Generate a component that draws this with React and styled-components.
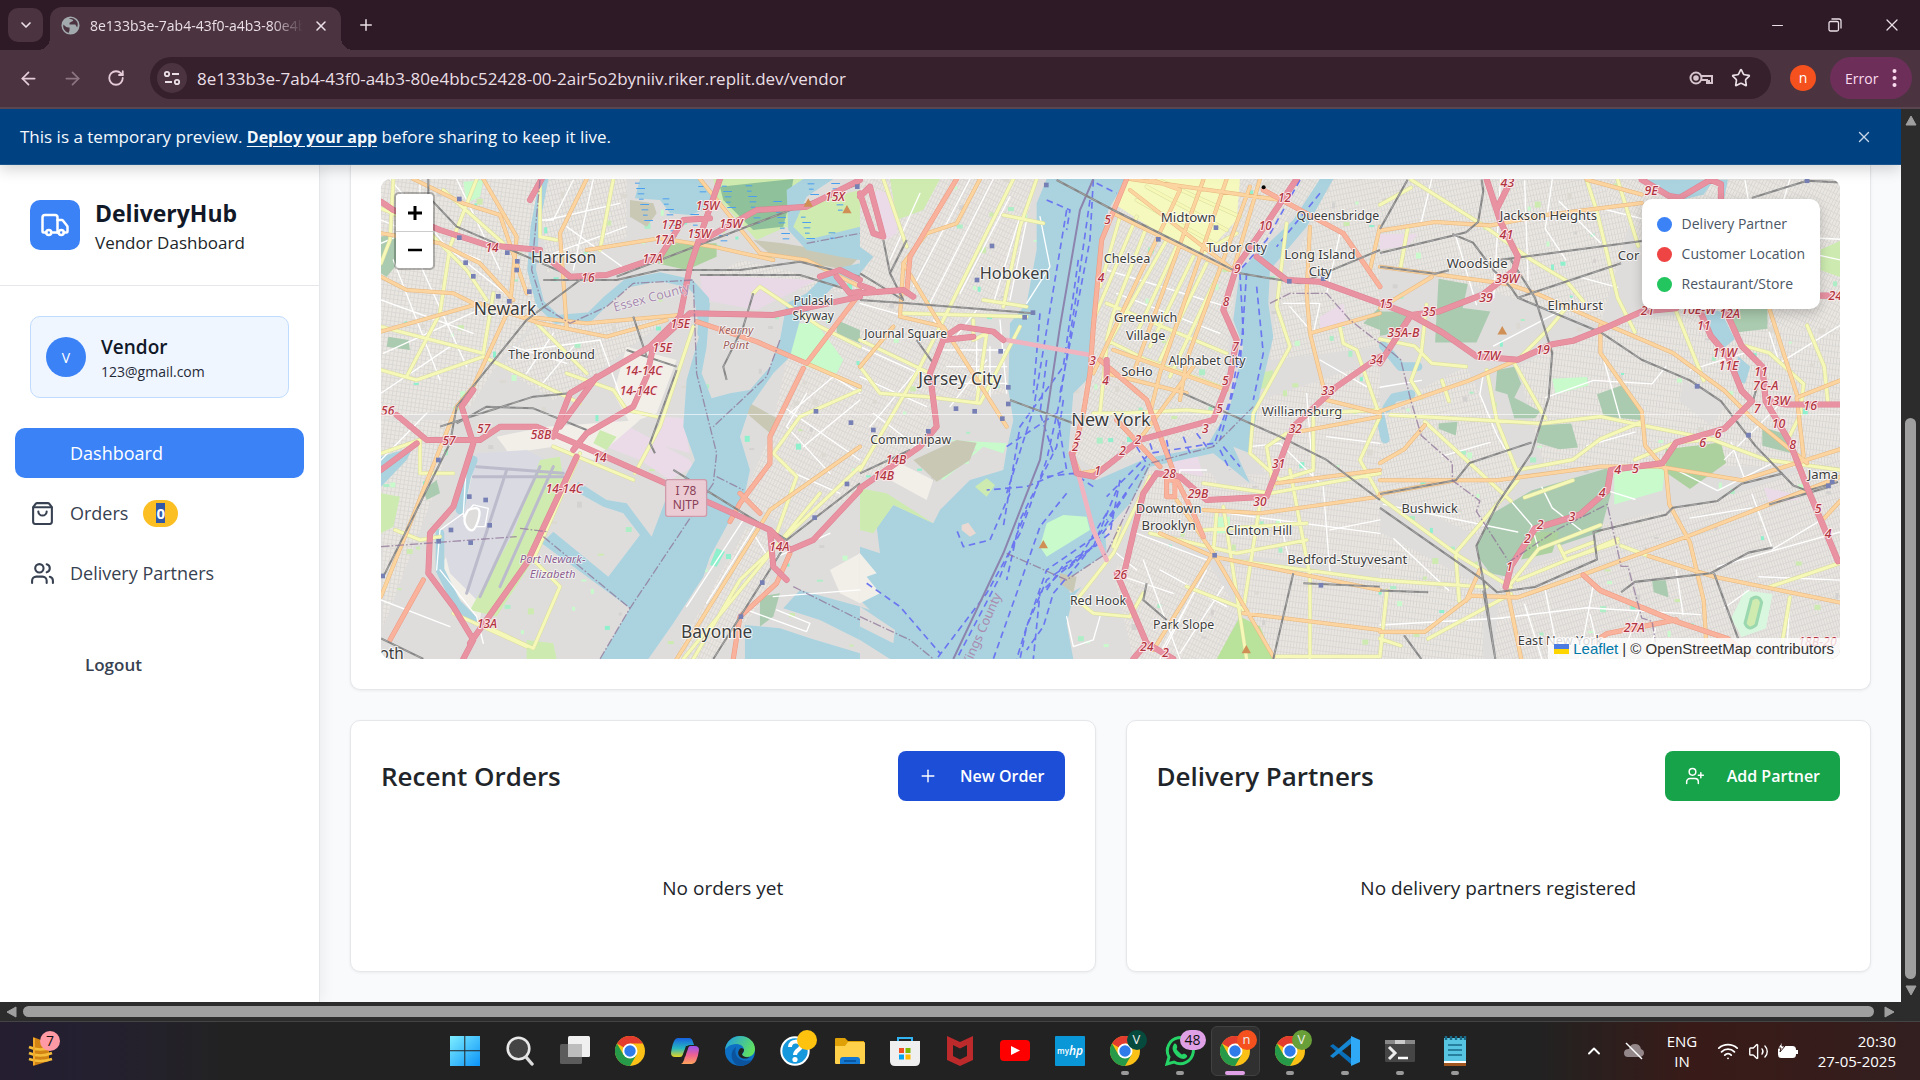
import React from "react";
import styled, { createGlobalStyle } from "styled-components";
import { Truck, ShoppingBag, Users, Plus, UserPlus, X, ArrowLeft, ArrowRight, RotateCw, ChevronDown, ChevronUp, Minus, Star, Wifi, Volume2 } from "lucide-react";

const ui = `"Open Sans", "Noto Sans", sans-serif`;

const Global = createGlobalStyle`
  *, *::before, *::after { box-sizing: border-box; }
  html, body { margin: 0; overflow: hidden; }
  body { font-family: ${ui}; color: #212529; background: #f9fafb; }
  button { font-family: inherit; border: 0; padding: 0; background: none; color: inherit; cursor: pointer; }
  h1, h2, p { margin: 0; }
  svg { display: block; flex: none; }
`;

const Screen = styled.div`display: flex; flex-direction: column; height: 100vh; min-height: 720px;`;

/* ---------- browser window ---------- */
const TabStrip = styled.header`
  display: flex; align-items: center; height: 50px; padding-left: 8px;
  background: #2e1a26; color: #eadfe5;
`;
const TabMenu = styled.button`
  display: grid; place-items: center; width: 35px; height: 34px; border-radius: 10px; background: #4b3440;
`;
const Tab = styled.div`
  position: relative; display: flex; align-items: center; gap: 10px; align-self: flex-end;
  width: 291px; height: 43px; margin-left: 7px; padding: 0 12px 6px 11px;
  border-radius: 12px 12px 0 0; background: #4b3440; font-size: 14px;
  &::before, &::after {
    content: ""; position: absolute; bottom: 0; width: 12px; height: 12px;
  }
  &::before { right: 100%; background: radial-gradient(circle at 0 0, transparent 12px, #4b3440 12px); }
  &::after { left: 100%; background: radial-gradient(circle at 100% 0, transparent 12px, #4b3440 12px); }
`;
const TabTitle = styled.span`
  flex: 1; overflow: hidden; white-space: nowrap;
  mask-image: linear-gradient(90deg, #000 85%, transparent);
`;
const NewTab = styled.button`display: grid; place-items: center; width: 34px; height: 34px; margin-left: 8px;`;
const WindowButtons = styled.div`
  display: flex; margin-left: auto; height: 100%;
  button { display: grid; place-items: center; width: 57px; }
`;
const Toolbar = styled.div`
  display: flex; align-items: center; height: 59px; padding: 0 8px 1px 6px;
  background: #4b3440; color: #eadfe5; border-bottom: 2px solid #5a4650;
`;
const NavButton = styled.button`
  display: grid; place-items: center; width: 44px; height: 40px; color: ${(p) => (p.$dim ? "#8d7682" : "#e6cbd9")};
`;
const AddressBar = styled.label`
  display: flex; align-items: center; flex: 1; height: 42px; margin-left: 12px; padding: 0 20px 0 7px;
  border-radius: 21px; background: #35202b;
`;
const SiteInfo = styled.button`
  display: grid; place-items: center; width: 30px; height: 30px; border-radius: 50%; background: #4b3440;
`;
const Address = styled.input`
  flex: 1; min-width: 0; border: 0; outline: 0; padding: 0 10px; background: none; color: #eadfe5;
  font-family: ${ui}; font-size: 17px;
`;
const BarIcon = styled.button`display: grid; place-items: center; width: 40px; height: 30px; &:last-child { width: 20px; margin-left: 10px; }`;
const Profile = styled.button`
  width: 26px; height: 26px; margin: 0 14px 0 19px; border-radius: 50%; background: #f4511e; color: #fff; font-size: 14px; line-height: 24px;
`;
const ErrorPill = styled.button`
  display: flex; align-items: center; justify-content: space-between; width: 82px; height: 42px; padding: 0 15px;
  border-radius: 21px; background: #6d2f5a; color: #fbdcee; font-size: 14px;
`;

const Viewport = styled.div`
  display: grid; flex: 1; min-height: 0; grid-template: minmax(0, 1fr) 19px / minmax(0, 1fr) 19px; background: #2c2c2c;
`;
const Scrollbar = styled.div`
  display: flex; flex-direction: ${(p) => (p.$vertical ? "column" : "row")}; align-items: center;
  padding: ${(p) => (p.$vertical ? "5px 0" : "0 5px")}; color: #9f9f9f;
`;
const ScrollSpace = styled.span`flex: ${(p) => p.$share};`;
const ScrollThumb = styled.span`
  flex: ${(p) => p.$share}; border-radius: 6px; background: #9f9f9f;
  ${(p) => (p.$vertical ? "width: 11px; margin: 4px 4px 6px;" : "height: 11px; margin: 4px 10px 4px 6px;")}
`;
const PageArea = styled.div`display: flex; flex-direction: column; min-height: 0; overflow: hidden; background: #f9fafb;`;

/* ---------- preview banner ---------- */
const Banner = styled.aside`
  position: relative; z-index: 2; display: flex; align-items: center; justify-content: space-between;
  height: 56px; flex: none; padding: 0 28px 0 20px; background: #004182; border-bottom: 1px solid #1c548e; color: #f5f9fc;
  font-size: 17px; box-shadow: 0 4px 14px rgba(0, 0, 0, 0.18);
  a { color: inherit; font-size: 16px; font-weight: 700; text-underline-offset: 3px; }
`;

/* ---------- vendor dashboard ---------- */
const Shell = styled.div`display: flex; flex: 1; min-height: 0;`;
const Sidebar = styled.nav`
  width: 320px; flex: none; background: #fff; border-right: 1px solid #e5e7eb; box-shadow: 4px 0 12px rgba(0, 0, 0, 0.05);
`;
const Brand = styled.div`
  display: flex; align-items: center; gap: 15px; height: 121px; padding: 0 30px; border-bottom: 1px solid #e5e7eb;
`;
const BrandMark = styled.span`
  display: grid; place-items: center; width: 50px; height: 50px; border-radius: 10px; background: #3b82f6; color: #fff;
`;
const BrandName = styled.h1`font-size: 23px; line-height: 36px; font-weight: 700; color: #111827;`;
const BrandSub = styled.p`font-size: 17px; line-height: 24px;`;
const UserCard = styled.div`
  display: flex; align-items: center; gap: 15px; height: 82px; margin: 30px; padding: 0 15px;
  border: 1px solid #bfdbfe; border-radius: 10px; background: #eff6ff;
`;
const UserAvatar = styled.span`
  display: grid; place-items: center; width: 40px; height: 40px; border-radius: 50%; background: #3b82f6; color: #fff; font-size: 14px;
`;
const UserName = styled.p`font-size: 19px; line-height: 30px; font-weight: 600; color: #111827;`;
const UserMail = styled.p`font-size: 14px; line-height: 20px; color: #1f2937;`;
const Menu = styled.div`display: flex; flex-direction: column; gap: 10px; padding: 0 15px;`;
const MenuItem = styled.a`
  display: flex; align-items: center; gap: 15px; height: 50px; padding: 0 15px; border-radius: 10px;
  font-size: 18px; text-decoration: none;
  color: ${(p) => (p.$active ? "#fff" : "#374151")}; background: ${(p) => (p.$active ? "#3b82f6" : "transparent")};
`;
const MenuIcon = styled.span`display: grid; place-items: center; width: 25px; height: 25px;`;
const CountBadge = styled.span`
  padding: 3px 13px; border-radius: 14px; background: #fbbf24; color: #fff; font-size: 15px; line-height: 21px; font-weight: 700;
  mark { background: #3159a8; color: inherit; }
`;
const Logout = styled.button`
  display: block; margin: 41px 30px 0; padding: 0 55px; height: 50px; font-size: 17px; font-weight: 600; color: #374151;
`;
const Main = styled.main`display: flex; flex-direction: column; gap: 30px; flex: 1; min-width: 0; padding: 0 30px 30px;`;
const Card = styled.section`
  padding: 30px; border: 1px solid #e5e7eb; border-radius: 10px; background: #fff; box-shadow: 0 1px 3px rgba(0, 0, 0, 0.06);
`;
const MapCard = styled(Card)`padding-top: 14px; border-top: 0; border-radius: 0 0 10px 10px;`;
const CardGrid = styled.div`display: grid; grid-template-columns: 1fr 1fr; gap: 30px;`;
const CardHead = styled.div`display: flex; align-items: center; justify-content: space-between; height: 50px;`;
const CardTitle = styled.h2`font-size: 26px; line-height: 36px; font-weight: 600; color: #212529;`;
const Action = styled.button`
  display: flex; align-items: center; gap: 20px; height: 50px; padding: 0 20px; border-radius: 8px;
  background: ${(p) => p.$tone}; color: #fff; font-size: 16px; font-weight: 600;
  svg { margin-right: 2px; }
`;
const Empty = styled.p`padding: 72px 0 50px; text-align: center; font-size: 19px; line-height: 30px; height: 140px;`;

/* ---------- map ---------- */
const MapFrame = styled.div`position: relative; height: 480px; overflow: hidden; border-radius: 10px; background: #dedddc;`;
const MapSvg = styled.svg`width: 100%; height: 100%; text { font-family: "Noto Sans", sans-serif; text-anchor: middle; paint-order: stroke; stroke-linejoin: round; }`;
const ZoomControl = styled.div`
  position: absolute; top: 13px; left: 13px; display: grid; grid-template-rows: 37px 37px; width: 41px;
  border: 2px solid rgba(0, 0, 0, 0.25); border-radius: 5px; background: #fff; background-clip: padding-box;
  button { display: grid; place-items: center; color: #000; }
  button + button { border-top: 1px solid #ccc; }
`;
const Legend = styled.ul`
  position: absolute; top: 20px; right: 20px; display: grid; gap: 10px; margin: 0; padding: 15px; list-style: none;
  border-radius: 10px; background: #fff; box-shadow: 0 4px 12px rgba(0, 0, 0, 0.2); color: #4b5563; font-size: 14px; line-height: 20px;
  li { display: flex; align-items: center; gap: 10px; }
`;
const Dot = styled.span`width: 15px; height: 15px; border-radius: 50%; background: ${(p) => p.$color};`;
const Attribution = styled.div`
  position: absolute; right: 0; bottom: 0; display: flex; align-items: center; height: 21px; padding: 0 6px; gap: 4px;
  background: rgba(255, 255, 255, 0.8); color: #333; font-family: "Liberation Sans", Arial, sans-serif; font-size: 15px;
  a { color: #0078a8; text-decoration: none; }
`;

/* The map is drawn in three sheets, west to east; each has its own origin and scale. */
const sheets = [
  {
    at: "translate(-41 -19) scale(0.3333)",
    grids: [
      ["g1", "M123 57H600L570 330L600 470L480 600L390 740L123 780Z"], ["g2", "M600 57H860V230L780 270L620 340Z"],
      ["g2", "M600 480L980 480L700 690L640 720L480 620Z"], ["g3", "M1340 600L1560 430V1000L1340 1110L1210 1010L1290 830Z"],
      ["g1", "M123 780H340L290 980L130 1400Z"], ["g3", "M1220 1100L1290 1130L1290 1300L1120 1497H1000Z"], ["g2", "M1090 370L1560 400V380L1200 300Z"],
    ],
    land: [
      ["#e9d9e6", "M1080 345L1430 360L1250 450L1090 420Z"], ["#ebdbe8", "M770 800L830 780L1050 900L1060 920L990 960L900 900L770 850Z"], ["#ebdbe8", "M970 770L1030 775L1050 880L940 850Z"],
      ["#f2efe9", "M860 560L1010 600L950 760L870 790L820 700Z"], ["#f2efe9", "M470 830L620 800L900 780L760 900L640 860L380 900L370 1100L290 1240L420 1380L500 870Z"],
      ["#dadae2", "M410 880L560 870L680 930L600 1110L430 1340L330 1240L300 1120L380 1020Z"], ["#cfebb0", "M600 900L660 890L670 960L580 1200L470 1370L390 1350L520 1120Z"],
      ["#c8facc", "M1360 490L1430 490L1510 600L1490 640L1400 620L1330 560Z"], ["#aacbaf", "M123 230L170 220L190 290L140 350L123 340Z"], ["#aacbaf", "M145 530L205 540L210 570L140 560Z"],
      ["#aacbaf", "M1490 480L1560 510V550L1490 520Z"], ["#cdebb0", "M123 1000L180 1010L160 1100L123 1120Z"],
      ["#add19e", "M980 250L1130 250L1130 290L1040 330L950 310Z"], ["#c9c8b5", "M1240 240L1330 250L1560 290L1520 330L1300 290Z"],
      ["#cfebb0", "M1120 57H1390L1360 140L1560 90V240L1400 250L1340 200L1250 240L1130 110Z"], ["#8fc19a", "M1140 80L1360 57L1350 120L1330 200L1240 210L1150 120Z"],
      ["#c9c8b5", "M870 120L940 130L950 160L920 200L870 170Z"], ["#c9c8b5", "M1230 730L1320 780L1290 820L1220 760Z"], ["#8ef0cd", "M1130 1165L1155 1175L1130 1220L1110 1215Z"],
      ["#cdebb0", "M780 810L830 830L800 870L760 850Z"], ["#c8facc", "M370 65L430 60L420 110L380 130Z"], ["#aacbaf", "M250 990L290 960L300 1000L260 1020Z"],
      ["#cdebb0", "M560 1440L640 1450L650 1497H560Z"],
    ],
    water: [
      "M900 57H1085L1125 100L1090 150L1050 165L990 160L960 120L885 115Z", "M1340 90L1390 57H1480L1400 110L1360 200L1400 240L1560 200V300L1500 290L1400 270L1345 210Z",
      "M1560 310L1470 330L1400 400L1340 430L1320 540L1290 620L1230 690L1170 700L1115 715L1085 640L1100 560L1110 430L1060 400L1080 520L1040 660L1030 800L1065 900L1030 960L990 985L935 1130L860 1030L800 1020L715 965L700 990L790 1040L850 1060L900 1125L805 1250L640 1115L605 1150L870 1345L780 1497H925L1000 1390L1090 1250L1110 1190L1170 1080L1215 1000L1230 930L1200 830L1230 740L1300 640L1350 590L1380 480L1480 380L1560 350Z",
      "M1215 1395L1320 1405L1410 1435L1560 1480V1497H1215Z", "M1380 1290L1450 1310L1560 1340V1440L1440 1380L1330 1345Z", "M123 890L220 860L200 900L123 980Z",
    ],
    islands: [["#aacbaf", "M1260 1310L1320 1300L1300 1370L1260 1400Z"], ["#f2efe9", "M1470 1230L1560 1180V1330L1500 1300Z"]],
    river: ["M612 57L585 200L575 330L600 430L650 478L750 470L800 420L860 370L960 350L1050 370L1095 420L1085 520", "M400 900L380 950L360 1050M300 1120V1230L350 1330L400 1380"],
    minor: ["M150 57L320 260L520 420M240 57V200L123 250M350 57L480 330M680 200L860 330M700 60L640 180L600 180M123 900L260 760M560 570L780 540L860 760M600 680L700 560M1330 740L1560 900M1400 700L1340 800L1470 940M1240 1120L1290 1200L1470 1120M123 1320L330 1400M1300 1310L1560 1290M1310 1350L1410 1390L1400 1415L1220 1350", "M300 1230L410 1370L430 1450M380 900L370 1060L300 1110L290 1230M370 1070L400 1035L445 1045L435 1100L380 1100L370 1060", "M123 180L420 300M123 420L400 520M160 300L300 660M230 290L380 620M130 580L460 430M123 700L330 560M620 180L840 130M640 280L860 200M760 57L700 330M520 560L680 610M640 520L560 640M1350 760L1480 650L1560 700M1390 860L1560 720M1340 930L1500 1000M1250 1090L1100 1330M1210 1080L1040 1340"],
    secondary: ["M160 57L150 240L123 310", "M123 145L250 200L380 330L440 420M310 90L490 250M123 630L230 660L430 590L720 730M410 57L330 260L300 460L200 650M123 500L430 580L460 400M600 60L600 230L650 240M820 57L780 270M680 640L820 690L860 750L950 770M1060 500L960 800L885 940M590 490L740 640M640 860L880 960M720 880L580 1200L660 1280L580 1465L440 1400M123 880L240 840L240 940H340M165 1110L240 1140L300 1130M1560 690L1380 770L1300 880L1370 950L1310 1120M1440 1000L1030 1497M1560 920L1200 1260L1060 1497M1560 560L1440 500L1260 380L1240 400M340 1360L560 1460"],
    primary: ["M220 57L370 130L480 165L560 400M123 220L300 250L420 310L520 420M430 57L530 230L510 440L400 680L350 740L123 1310M740 57L660 220L680 500M123 350L200 390L340 400L420 440M123 515L420 430L600 490L800 530L980 480M560 470L740 490L1020 465M740 270L960 235L1120 260L1300 300M1080 57L1260 280L1400 300L1560 380M1400 610L1560 680M1560 860L1290 1050L1010 1497"],
    trunk: ["M1070 485L1250 545L1400 610L1560 400M1390 625L1290 830V910L1200 1030L1170 1085M1200 1000L1260 1060M1350 1180L1310 1270L1200 1370L1180 1497", "M250 1260L150 1440"],
    motorway: ["M123 125L160 150L300 210L440 255L600 270M570 120L605 57M630 300L690 350L800 345L960 290L1030 180L1110 175M1140 57L1090 200L1050 320L1030 420L1020 470L930 560L690 700L640 830M1560 360L1500 330L1440 350M1090 240L1250 150L1400 140L1560 60M1560 410L1300 465L1050 460L940 560L920 650L880 740L740 820L700 870M170 765L260 840L420 840L480 800L590 800L730 860L1000 980L1290 1110L1350 1170L1420 1140L1560 990M123 930L230 850M400 690L365 740L400 850L340 1040L270 1120L265 1240L340 1340L400 1440L370 1497M710 890L560 1210L390 1450M1290 1110L1300 1220L1340 1260M1490 350L1530 400L1560 395", "M770 650L660 800"],
    rail: ["M265 57V110L350 200L560 290L720 360L560 480L350 740L330 850L130 1250M610 360L830 360L960 330L1200 330L1380 305L1560 350M830 350L1560 70M1080 345L1380 345L1560 400M300 800L580 710L690 700M350 790L440 740L580 745L740 810M1010 620L860 570M880 470L920 590M1010 630L930 850L945 880M1000 930L1340 1140L1560 970M1340 1150L1120 1497M1240 400L1210 500L1150 620L1160 660M123 1435L250 1497"],
    runway: ["M410 920L670 940M400 950L670 950M640 920L480 1280M600 920L420 1310M500 930L380 1300"],
    boundary: ["M600 60L575 330L610 440L690 490L800 440L880 370L1060 360L1070 640L1130 880L1120 970L870 1345L780 1497M1320 540L1280 650L1120 800M1130 950L1210 990M610 1130L870 1345M540 1105L620 1115M123 1160L530 1130M1400 250L1560 220M1360 1280L1560 1380"],
    ferry: [],
    stations: [[358,117],[358,233],[377,308],[400,349],[502,278],[532,304],[530,330],[475,409],[508,424],[568,395],[295,900],[388,1010],[437,1020],[449,1096],[392,1148],[333,1110],[296,1144],[1428,754],[1533,788],[1521,972],[1424,1073],[1267,1268],[1203,1370],[128,1248],[1552,80]],
    labels: [["Harrison",671,310,48],["Newark",495,466,52],["The Ironbound",635,598,37],["Pulaski",1420,434,36],["Skyway",1420,479,36],["Bayonne",1130,1434,52],["oth",155,1497,46]],
    places: [["Kearny",1188,522,34,"#a0605c"],["Point",1188,566,34,"#a0605c"],["Port Newark-",638,1209,34,"#8d6090"],["Elizabeth",638,1254,34,"#8d6090"]],
    exits: [["15W",1103,150],["15X",1485,122],["17B",995,206],["15W",1173,204],["15W",1078,234],["17A",974,253],["17A",938,309],["14",456,275],["16",744,365],["15E",1021,505],["15E",967,577],["14-14C",911,645],["14-14C",895,706],["56",143,764],["57",431,818],["57",327,855],["58B",603,836],["14",780,907],["14-14C",673,998],["14A",1318,1173],["13A",441,1403]],
    peaks: [[1405,140],[1521,160]],
  },
  {
    at: "translate(479 -19) scale(0.3333)",
    grids: [
      ["g3", "M0 57H530L440 450L300 480L440 700L240 720L170 880L0 960Z"], ["g4", "M800 57H1400L1130 330L1080 800L700 930L640 880L700 500Z"],
      ["g5", "M1400 57H1560V560L1230 600L1250 400L1350 200Z"], ["g6", "M1200 720L1560 600V1000L1230 960L1160 860Z"],
      ["g6", "M860 930L1560 960V1230L1080 1180L820 1100Z"], ["g3", "M840 1120L1040 1200L1140 1360L1080 1497H820L760 1240Z"], ["g6", "M1090 1210L1560 1260V1497H1230Z"],
    ],
    land: [
      ["#ebdbe8", "M50 90L120 110L110 220L80 240L30 120Z"], ["#cfebb0", "M90 57H240L190 150L110 180Z"], ["#c8facc", "M270 840L440 850L430 880L370 860L250 960L220 940L350 870Z"],
      ["#f2efe9", "M100 900L220 960L200 1020L90 960Z"], ["#ebdbe8", "M1380 470L1450 430L1460 500L1380 510Z"],
      ["#f6f9be", "M800 57H1140L1130 180L1030 290L930 240L760 130Z"], ["#aacbaf", "M1510 490L1560 440V510Z"], ["#dedddc", "M1030 900L1100 900L1190 970L1080 980Z"], ["#b9e39a", "M1140 1370L1200 1400L1240 1497H1070Z"],
      ["#c8facc", "M1060 1070H1110V1120H1070Z"], ["#cdebb0", "M1200 640L1240 630L1230 680L1190 690Z"], ["#ebdbe8", "M930 880L1010 880L1030 950L940 930Z"],
    ],
    water: [
      "M530 130L560 57H800L745 150L725 280L700 500L690 650L640 700L625 880L650 940L710 960L860 895L1040 860L1110 740L1150 560L1120 480L1140 330L1300 180L1380 57H1420L1340 200L1230 330L1225 430L1240 530L1200 700L1170 880L1120 860L1170 970L1060 880L870 920L840 980L780 1080L760 1180L700 1240L640 1310L620 1390L640 1497H0V1340L30 1350L0 1320V1160L60 1180L50 1100L100 1035L220 1090L240 1050L330 960L430 930L440 870L460 780L445 690L450 490L500 430L530 270Z",
      "M0 260L40 290L0 340Z",
    ],
    river: [],
    islands: [["#c9c8b5", "M160 900L290 840L350 848L330 900L230 965Z"], ["#c8facc", "M540 1160L560 1090L610 1065L680 1070L690 1110L560 1190Z"], ["#cdebb0", "M345 980L380 955L405 975L380 1010Z"], ["#ead9d2", "M305 1095L325 1088L348 1120L330 1130L305 1110Z"], ["#dedddc", "M0 1340L105 1410L100 1450L0 1400Z"], ["#f2efe9", "M0 1180L50 1240L20 1250L60 1300L0 1330Z"], ["#dedddc", "M0 1440L90 1497H0Z"], ["#cdebb0", "M0 985L80 1000L220 1090L100 1035L40 1120L0 1110Z"], ["#dedddc", "M735 1110L840 1000L820 1160L790 1180L760 1230L630 1300L620 1260L740 1180Z"], ["#c9c8b5", "M600 1240L650 1250L640 1300L600 1270Z"]],
    minor: ["M480 170L400 430M540 170L570 320L500 430M350 450L280 540L220 480M250 570L440 570M350 540V720M420 480L440 700M0 650L200 740M40 760L170 860M270 740L380 600M180 100L90 300M0 430L140 470M740 330L1100 440M770 400L1080 520M1270 430L1380 430L1360 520L1290 440M1340 700L1360 960M1040 930L960 930L950 1020M830 1120L1040 1200M850 1200L960 1497M770 1180L830 1230M1170 860L1260 850L1380 970M900 1230L1100 1340M1560 1120L1100 1060", "M620 1370L640 1460L700 1440L720 1370", "M330 57L160 380M400 57L210 430M450 110L300 400M500 180L450 420M0 560L220 660M30 800L180 620M260 620H440M270 670H440M390 560V720M760 1240L940 1300M900 1480L1040 1230M960 1480L1090 1280M1000 1300L900 1497M1380 600L1520 680M1400 830L1560 850M1410 1110L1560 1080M1440 220L1400 400M1260 1080L1290 1210M1390 980L1410 1240"],
    secondary: ["M0 620L60 700L200 710L360 730L480 500M70 57L140 260M460 57L170 640L0 930M530 57L480 200L430 440M370 420L500 440M430 165L550 190M0 540L210 640M130 460L500 470M340 480L340 540L380 520L350 730M860 80L1100 210M830 120L1080 260M890 57L1140 170M780 170L720 380M830 170L700 480M860 200L760 460L740 540M920 240L740 560L720 760M950 260L830 520M1000 290L870 560M1040 310L900 600M1080 330L930 650M740 540L860 600L1080 680M740 430L1100 580M700 760L790 760L980 750L1080 760M1130 220L1040 270M1280 190L1250 440L1290 560L1180 760L1170 880L1260 960L1360 930V760L1560 750M1440 500L1450 550L1490 570L1560 770L1500 900L1560 1010M1240 980L1220 860L1280 820M1030 970L1230 1000L1560 940M1090 1040L1160 1497M1290 930L1350 1250V1497M1030 1110L1340 1090M1110 1200L1560 1260M1070 1060L1060 1180M1200 1030L1150 1350M870 1120L1130 1180L1340 1140M870 950L760 1180L650 1320L700 1360L810 1370L850 1300M980 1280L1160 1350M1240 1490H1560M780 1100L760 1160"],
    primary: ["M360 57L290 190L200 220L130 310L120 470L250 500L440 800M130 310L250 510M100 500L0 620M810 90L1120 330L1200 57M760 160L1110 330M810 57L1260 120M760 570L1100 690M870 57L960 90L700 640M1030 60L820 640M1100 57L900 640L870 760M1170 80L980 600L960 720M740 640L980 700M640 890L660 940L720 930L830 850L1000 620M1350 200L1340 400L1350 520L1400 720L1560 760M1350 520L1560 460M1290 820L1560 770M950 1020L1060 1180L1240 1490M1060 1180L880 1470M1060 1190L1560 1290M1030 1050L1200 1060L1560 1010M900 1120L1060 1190M1150 1360L1560 1410M1250 970L1560 930M1530 330L1560 200"],
    trunk: ["M290 57L150 290L140 400M800 57L725 240L700 500L690 640L670 760L640 880M720 600L860 720L950 960L1000 1060L1030 1130M770 780L900 920M1210 90L1450 220L1560 380", "M920 960H945V1010H920Z"],
    motorway: ["M0 110L30 80L70 230L40 220L0 100M0 400L130 390L160 410M0 375L40 390M270 520L300 500L400 515L430 540M340 530L250 540L210 640L230 800L180 860L0 985M1310 57L1200 220L1130 320L1090 450L1130 540L1110 650L1060 780L840 840L700 950L650 940L635 880M1190 290L1280 360L1380 365L1560 430M1560 590L1430 680L1300 800L1220 1010L1040 1020L960 950L890 940L850 1000L820 1120L790 1250M770 1240L860 1450L820 1497M860 1450L940 1497M740 600V660"],
    tunnel: ["M440 540L690 585M640 890L660 960L700 1110L740 1200"],
    rail: ["M70 240L90 340L130 420L0 340M140 240L90 340M0 420L140 430L520 460M170 540L220 610M0 940L150 870M450 720L640 790M590 60L760 150L940 240L1140 340L1320 370M1320 370L1560 270M970 700L1260 830L1400 900L1560 1020M860 1270L850 1320L920 1380M1300 1240L1240 1497M1330 1270L1560 1280"],
    runway: [],
    border: ["M700 57L660 150L600 500L540 900L430 1180L280 1497"],
    boundary: ["M440 1180L620 1260L740 1180L870 910L1060 860L1180 740M1230 430L1290 400L1400 400L1470 480L1560 550M0 1370L150 1440L220 1497"],
    ferry: ["M620 150L570 450L520 750L440 1000M690 120L650 400L600 720L560 900L480 1120L380 1300L230 1497M655 300L610 620L480 800L430 1100M540 460L520 700M700 60L690 240L640 500L600 700M710 70L770 100M560 120L630 150L620 210M440 860L590 760L620 930L500 980L380 990M450 1000L390 1140L310 1160L290 1110M620 1000L540 1100L470 1300L400 1497M700 980L640 940L560 950M800 1000L720 1120L560 1230L500 1400L480 1497M780 960L750 1120L600 1240L540 1300L520 1497M760 1080L640 1230L580 1300L550 1400L500 1470M1060 850L870 880L740 1010M1140 340L1150 520L1110 720L1060 860M1160 340L1140 620L1080 840M1320 60L1220 240L1140 330M1380 100L1250 260M20 1270L120 1340L240 1480M830 860L860 910L740 1080M870 850L880 880M920 840L930 890M970 830L990 880M1010 820L1040 860M1190 380L1210 580L1180 720", "M740 1060L660 1190L560 1260L500 1400L470 1497M720 1150L610 1215L560 1290M770 990L700 1160L620 1230M500 1050L420 1250L290 1497M610 720L590 860L480 1080L440 1260M560 600L540 760L580 880M1080 870L1110 930M1090 860L1140 920"],
    stations: [[559,75],[396,258],[351,360],[519,458],[494,472],[422,574],[445,682],[445,732],[427,776],[344,754],[288,746],[40,810],[205,814],[895,238],[1068,203],[1288,364],[1390,356],[1064,1186],[1383,1276]],
    labels: [["Hoboken",464,357,49],["Midtown",985,185,40],["Chelsea",801,308,38],["Tudor City",1130,277,38],["Queensbridge",1434,180,37],["Long Island",1380,296,39],["City",1381,348,39],["Greenwich",857,487,38],["Village",857,541,38],["Journal Square",137,533,36],["Jersey City",300,676,52],["SoHo",831,648,38],["Alphabet City",1041,616,37],["Williamsburg",1326,767,39],["New York",753,799,54],["Communipaw",152,852,37],["Downtown",926,1058,39],["Brooklyn",926,1111,39],["Clinton Hill",1197,1125,39],["Bedford-Stuyvesant",1462,1213,39],["Red Hook",714,1335,37],["Park Slope",971,1408,37]],
    places: [],
    exits: [["12",1274,125],["10",1216,210],["5",743,192],["9",1132,338],["4",723,366],["8",1098,439],["7",1127,572],["3",698,614],["5",1096,674],["4",737,674],["33",1404,705],["34",1549,611],["5",1079,758],["32",1306,818],["3",1036,818],["2",654,839],["2",834,852],["2",646,874],["2",788,885],["14B",108,912],["1",713,945],["31",1256,924],["28",928,954],["14B",71,961],["29B",1014,1015],["30",1200,1038],["26",782,1257],["24",861,1473],["2",917,1490]],
    peaks: [[550,1165],[1159,1480]],
  },
  {
    at: "translate(999 -19) scale(0.3444)",
    grids: [["g5", "M0 57H760L640 480L320 380L0 300Z"], ["g6", "M400 600L640 480L1336 380V900L800 880L480 900Z"], ["g5", "M0 720L250 600L400 900L300 1100L0 960Z"], ["g3", "M640 57H1336V500L900 480Z"], ["g6", "M0 1080L300 1240V1449H0Z"], ["g7", "M350 1210L1336 860V1449H330Z"], ["g7", "M640 1060L1336 900V1300L600 1200Z"]],
    land: [
      ["#aacbaf", "M170 345L255 360L240 430L320 440L280 530L160 530Z"], ["#aacbaf", "M0 440L90 440L70 500L0 510Z"], ["#aacbaf", "M340 610L390 600L410 650L390 690L465 730L450 750L390 750L370 680L335 670Z"],
      ["#aacbaf", "M630 680L700 655L765 730L755 755L650 745Z"], ["#aacbaf", "M465 770L555 765L575 835L520 840L455 820Z"], ["#aacbaf", "M280 1120L320 1030L440 960L660 895L670 970L640 1080L520 1120L440 1060L370 1210L320 1200L290 1160Z"],
      ["#add19e", "M830 840L990 820L1005 880L900 955L820 900Z"], ["#c8facc", "M680 890L830 880L820 960L680 1000Z"], ["#add19e", "M440 1080L520 1080L500 1140L410 1160Z"], ["#aacbaf", "M1110 775L1190 800L1190 850L1110 830Z"],
      ["#aacbaf", "M1010 430H1125V490L1040 500Z"], ["#aacbaf", "M790 1220H830L838 1270L795 1255Z"], ["#aacbaf", "M170 765L225 760L220 800L170 780Z"], ["#ebdbe8", "M1115 950L1200 970L1220 985L1130 995Z"], ["#ebdbe8", "M0 215H110L80 250L0 260Z"],
      ["#c8facc", "M500 635L600 630L605 655L510 680Z"], ["#d9f7de", "M1060 1250L1140 1260L1120 1360L1050 1385L1020 1330Z"], ["#cdebb0", "M1280 260L1336 235V340L1280 320Z"], ["#dedddc", "M880 640L970 680L1000 720L960 770L870 700Z"], ["#dedddc", "M0 560L50 560L100 660L80 710L0 720Z"],
    ],
    water: ["M770 57H970L940 100L880 115L800 90Z", "M940 435L990 440L1030 520L1000 545L960 500Z", "M1040 570L1075 600L1060 650L1030 640Z", "M980 57H1010L1000 110Z"],
    river: ["M0 740L15 810M20 720L40 690L90 680M10 540L60 600L110 600"],
    minor: ["M330 400L350 57M500 57L480 200L540 290M580 340L690 370M640 140L760 170M330 540L540 430M650 580L700 760M480 690L620 640L790 650L830 600M300 620L290 680L340 800L400 900M1336 480L1160 590L1130 500M900 610L1060 560M1000 870L1090 780L1180 690M1020 820L1060 930M1080 970L1140 1130L1290 1040M1000 1300L1070 1250M470 950L500 1010L590 1080M0 1220L300 1240M0 1350L360 1330M350 1330L600 1300L930 1320M470 1449L420 1290M620 1230L580 1449M640 1449L610 1320M700 1449L760 1290M10 1000L400 1080M1190 57L1140 220L1336 230M1180 1449L1190 1270", "M380 990L440 1060L460 1130M660 960L740 985", "M150 57L120 180M220 220L280 420M420 60L430 350M520 120L640 240M0 660L120 640M180 860L320 820M40 1100L200 1250M600 830L740 790M860 900L980 960L1140 880M900 1040L1080 1010M980 1180L1336 1080M1100 1210L1336 1220M860 1190L880 1320M480 1250L520 1449M800 1360L780 1449M1060 60L1080 180M1200 260L1336 290"],
    secondary: ["M90 57L300 190L440 290L540 350L590 410M600 57L630 150L690 400L740 500M80 200L60 310M0 130L90 80M0 520L100 540L150 590L250 600M135 420L120 560L90 640L120 690M400 580L490 490L540 430M390 590L480 750M310 610L340 760L400 910M30 740L470 765L640 745L760 770L960 810L1120 870L1336 900M400 900L560 870L640 810L760 760M0 980L230 1150L380 1240M220 1140L400 930M220 1150L230 1280M640 1060L460 1130L380 1230M520 1120L540 1160L690 1110M700 1120L780 1150M860 440L940 640M1190 800L1220 740L1230 650L1130 560L1060 540M1240 480L1290 600L1300 700M0 1220L310 1240M20 1250L0 1440M1336 1170L1130 1240M400 1220L620 1130L690 1100M740 870L860 820L970 810M140 1390L380 1260M1190 1270L1160 1449M540 1140L620 1110M0 1390L60 1410M180 640L200 700M130 760L380 990M420 980L560 930M750 250L690 57"],
    primary: ["M0 205L160 180L320 190L480 160L760 125M600 57L760 100M0 310L370 360L460 390L640 470L850 560L1000 670L1080 750L1240 880M150 340L0 430M640 480L640 560L760 730L770 830L830 900L840 1000L900 1110L940 1280L950 1449M0 730L260 640L400 580M130 770L70 840L0 880M0 930L340 930L640 890L810 890L1050 930L1336 840M1130 430L1210 680M1336 640L1210 690L1230 860M0 970L220 930M290 1190L250 1280M260 1265L400 1270L600 1200L900 1090L1336 920M370 1250L410 1449M0 1370L130 1370L260 1270M780 1150L970 1210L1336 1285M1336 990L1290 1040"],
    trunk: ["M590 1205L640 1250L860 1340L1010 1390L1080 1449M860 1335L660 1375L620 1400"],
    motorway: ["M310 57L350 180L400 280L390 320L300 390L170 440L90 450L0 590M340 140L370 80M0 415L90 450L180 500L280 570L400 580L500 535L560 525L660 485L760 440L860 430M760 57L840 105L870 110L960 57L990 70V110M930 440L960 510L1010 570L1050 670L1080 700L1000 780L860 820L820 880L670 900L660 960L580 1030L450 1070L380 1180L365 1240M1000 430L1050 540L1110 600L1120 700L1190 820L1240 950L1330 1165M1130 700L1180 710L1336 710M1270 394H1336"],
    rail: ["M80 57L0 200M295 57L300 90L285 180L250 210L210 220L0 270M210 215L270 240L330 320L380 370L400 400L640 500L760 580L900 640L990 700L1090 830L1200 945L1240 960L1330 935M380 290L450 400L500 560L490 690L440 850L340 1000L280 1120L300 1220L335 1449M350 290L760 235M400 400L700 300M1130 1000L1300 950M0 970L220 930L260 880L440 820M0 1010L300 1220L340 1255L450 1240L630 1160L620 1080L830 1030L850 1010L980 990L1050 940L1170 910M0 310L160 330L200 320M700 1255L740 1225L960 1200L1070 1140L1140 1125M970 1200L1040 1390M1080 110L1240 60L1336 65M1100 640L1080 710M0 1250L140 1255M300 1250L335 1449M70 1380L120 1449"],
    runway: [], boundary: ["M0 530L60 580L90 700L120 800L210 880L210 930L290 990L280 1020L370 1160M370 1170L520 1070L660 1000L700 1180L720 1180L760 1330L790 1340L800 1400"], ferry: [],
    stations: [[1240,60],[921,657],[1070,799],[1313,934],[1302,946]],
    labels: [["Jackson Heights",489,174,38],["Woodside",282,314,38],["Cor",722,291,38],["Elmhurst",567,436,38],["Bushwick",144,1024,37],["Jama",1286,926,38],["East New York",523,1408,37]],
    places: [],
    exits: [["43",370,78],["9E",787,103],["41",367,228],["39W",369,358],["39",308,411],["35",142,454],["15",17,430],["35A-B",68,513],["17W",314,582],["19",473,562],["21",777,450],["10E-W",925,447],["12A",1015,458],["11",940,495],["11W",1001,573],["11E",1012,610],["11",1106,627],["7C-A",1120,669],["13W",1155,712],["7",1095,735],["16",1249,725],["10",1157,779],["6",982,807],["6",937,832],["8",1198,840],["4",690,913],["5",742,910],["4",645,979],["3",557,1049],["2",465,1071],["2",428,1112],["1",376,1194],["5",1272,1026],["4",1301,1097],["27A",738,1370],["24",1322,407],["18B-20",1270,1412]],
    peaks: [[355,507]],
  },
];

const roadStyles = {
  river: ["#aad3df", 26], minor: ["#ffffff", 4], secondary: ["#f5f8b6", 9, "#d9dca0"], primary: ["#fcd4a0", 9, "#e8b77c"],
  trunk: ["#f9b29c", 12, "#ee9880"], motorway: ["#e892a2", 15, "#df8293"], tunnel: ["#f0b4c0", 14], runway: ["#bbbbcc", 9],
};
const patterns = [["g1", 12, 13, 8], ["g2", 10, 15, -14], ["g3", 9, 17, 26], ["g4", 9, 16, 30], ["g5", 9, 16, -12], ["g6", 9, 17, 7], ["g7", 8, 17, -17]];

function Lines({ kind }) {
  const [color, width, edge] = roadStyles[kind];
  return (
    <g fill="none" strokeLinejoin="round" strokeLinecap="round">
      {edge && sheets.map((s) => <g key={s.at} transform={s.at} stroke={edge} strokeWidth={width + 3}>{(s[kind] || []).map((d) => <path key={d} d={d} />)}</g>)}
      {sheets.map((s) => <g key={s.at} transform={s.at} stroke={color} strokeWidth={width}>{(s[kind] || []).map((d) => <path key={d} d={d} />)}</g>)}
    </g>
  );
}
function Layer({ draw }) {
  return sheets.map((s) => <g key={s.at} transform={s.at}>{draw(s)}</g>);
}
const scatterColors = ["#c8facc", "#cdebb0", "#8ef0cd", "#dcd9d2", "#d4d2d0", "#aeeec6"];
const scatter = Array.from({ length: 420 }, (_, i) => ({ x: (i * 137.51) % 1459, y: (i * 73.37 + i * i * 0.19) % 480, w: 3 + (i % 4), h: 2 + (i % 5), c: scatterColors[i % 6] }));
const marsh = Array.from({ length: 64 }, (_, i) => ({ x: 885 + ((i * 83) % 660), y: 68 + ((i * 47) % 180), w: 14 + (i % 3) * 6 }));

function CityMap() {
  return (
    <MapSvg viewBox="0 0 1459 480" preserveAspectRatio="xMidYMid slice" role="img" aria-label="Street map of New York and Jersey City">
      <defs>
        {patterns.map(([id, w, h, a]) => (
          <pattern key={id} id={id} width={w} height={h} patternUnits="userSpaceOnUse" patternTransform={`rotate(${a})`}>
            <rect width={w} height={h} fill="#e9e5e0" />
            <path d={`M0 0H${w}M0 0V${h}`} stroke="#c3c1bf" strokeWidth="3" />
            <path d={`M0 0H${w}M0 0V${h}`} stroke="#f5f4f2" strokeWidth="1" />
          </pattern>
        ))}
      </defs>
      <rect width="1459" height="480" fill="#dedddc" />
      <Layer draw={(s) => s.grids.map(([id, d]) => <path key={d} d={d} fill={`url(#${id})`} />)} />
      {scatter.map((b, i) => <rect key={i} x={b.x} y={b.y} width={b.w} height={b.h} fill={b.c} />)}
      <Layer draw={(s) => s.land.map(([c, d]) => <path key={d} d={d} fill={c} />)} />
      <Layer draw={(s) => s.water.map((d) => <path key={d} d={d} fill="#aad3df" />)} />
      <Layer draw={(s) => (s.islands || []).map(([c, d]) => <path key={d} d={d} fill={c} />)} />
      <g transform={sheets[0].at} fill="#4a9ff0">{marsh.map((m, i) => <rect key={i} x={m.x} y={m.y} width={m.w} height="3" />)}</g>
      <Lines kind="river" /><Lines kind="runway" /><Lines kind="minor" />
      <Layer draw={(s) => s.ferry.map((d) => <path key={d} d={d} fill="none" stroke="#6c76f0" strokeWidth="5" strokeDasharray="20 13" />)} />
      <Layer draw={(s) => (s.border || []).map((d) => <path key={d} d={d} fill="none" stroke="#8c84ae" strokeWidth="6" />)} />
      <Lines kind="secondary" /><Lines kind="primary" /><Lines kind="tunnel" /><Lines kind="trunk" />
      <Layer draw={(s) => s.rail.map((d) => (
        <g key={d} fill="none" strokeLinejoin="round"><path d={d} stroke="#868686" strokeWidth="6" /><path d={d} stroke="#b5b5b5" strokeWidth="2" strokeDasharray="22 16" /></g>
      ))} />
      <Lines kind="motorway" />
      <Layer draw={(s) => s.boundary.map((d) => <path key={d} d={d} fill="none" stroke="#8f7498" strokeWidth="4" strokeDasharray="26 6 5 6" opacity="0.75" />)} />
      <g transform={sheets[0].at}>
        <path d="M385 1050Q430 1030 415 1080T380 1100Q365 1080 385 1050Z" fill="#dedddc" stroke="#fff" strokeWidth="7" />
        <rect x="977" y="959" width="123" height="110" rx="7" fill="#ecccd4" stroke="#cf9aaa" strokeWidth="4" />
        <g fontSize="36" fill="#8a3f58"><text x="1038" y="1004">I 78</text><text x="1038" y="1048">NJTP</text></g>
        <g fontSize="38" fill="#a98cb0" stroke="#fff8" strokeWidth="4"><text transform="rotate(-15 935 415)" x="935" y="425">Essex County</text></g>
      </g>
      <g transform={sheets[1].at}>
        <text transform="rotate(-66 370 1410)" x="370" y="1418" fontSize="38" fill="#a98cb0">Kings County</text>
        <circle cx="1211" cy="82" r="6" />
      </g>
      <g transform={sheets[2].at}><path d="M1078 1275Q1100 1260 1108 1285L1092 1350Q1070 1370 1060 1345Z" fill="#cfebb0" stroke="#9bd8b0" strokeWidth="9" /></g>
      <Layer draw={(s) => s.stations.map(([x, y]) => <rect key={`${x},${y}`} x={x - 7} y={y - 7} width="14" height="14" fill="#7780b4" />)} />
      <Layer draw={(s) => s.peaks.map(([x, y]) => <path key={x} d={`M${x - 14} ${y}h28l-14 -25z`} fill="#d08f55" />)} />
      <Layer draw={(s) => (
        <>
          <g fontStyle="italic" fontSize="36" fontWeight="500" fill="#b0333f" stroke="#fbe9ea" strokeWidth="6">{s.exits.map(([t, x, y]) => <text key={`${x}${y}`} x={x} y={y}>{t}</text>)}</g>
          <g fontStyle="italic" stroke="#fffb" strokeWidth="5">{s.places.map(([t, x, y, z, c]) => <text key={t} x={x} y={y} fontSize={z} fill={c}>{t}</text>)}</g>
          <g fill="#3d3d3d" stroke="#fffc" strokeWidth="6">{s.labels.map(([t, x, y, z]) => <text key={t} x={x} y={y} fontSize={z}>{t}</text>)}</g>
        </>
      )} />
      <path d="M0 235.500H1459" stroke="#fff" opacity="0.6" />
    </MapSvg>
  );
}

/* ---------- taskbar ---------- */
const Taskbar = styled.footer`
  display: grid; grid-template-columns: 1fr auto 1fr; align-items: center; height: 59px; flex: none;
  border-top: 1px solid #444; color: #fff;
  background: linear-gradient(90deg, #241e30 0%, #242030 5%, #222 12%, #222 80%, #381b18 88%, #361c1a 94%, #331f20 100%);
`;
const Widgets = styled.button`position: relative; width: 30px; height: 34px; margin-left: 27px;`;
const WidgetCount = styled.span`
  position: absolute; top: -3px; left: 13px; width: 20px; height: 20px; border-radius: 50%; background: #ff99a4; color: #111; font-size: 14px; line-height: 20px;
`;
const Apps = styled.div`display: flex;`;
const AppButton = styled.button`
  position: relative; display: grid; place-items: center; width: 55px; height: 50px;
  &::before {
    content: ""; display: ${(p) => (p.$active ? "block" : "none")}; position: absolute; inset: 0 3px;
    border: 1px solid #414141; border-radius: 6px; background: #303030;
  }
  &::after {
    content: ""; display: ${(p) => (p.$running ? "block" : "none")}; position: absolute; bottom: 1px;
    left: 50%; transform: translateX(-50%); width: ${(p) => (p.$active ? 20 : 8)}px; height: 4px; border-radius: 2px;
    background: ${(p) => (p.$active ? "#dfa0e6" : "#9a9a9a")};
  }
  svg { position: relative; }
`;
const AppBadge = styled.span`
  position: absolute; top: 4px; left: ${(p) => (p.$wide ? 27 : 29)}px; min-width: 20px; height: 20px; padding: 0 ${(p) => (p.$wide ? 5 : 0)}px;
  border-radius: 10px; background: ${(p) => p.$bg}; color: ${(p) => (p.$wide ? "#111" : "#eee")}; font-size: ${(p) => (p.$wide ? 14 : 13)}px; line-height: 19px;
`;
const Tray = styled.div`display: flex; align-items: center; justify-content: flex-end; gap: 8px; padding-right: 24px;`;
const TrayIcon = styled.button`display: grid; place-items: center; width: ${(p) => p.$width || 22}px; height: 30px;`;
const TrayText = styled.button`width: ${(p) => p.$width}px; text-align: ${(p) => p.$align}; font-size: 15px; line-height: 20px; white-space: nowrap;`;

const Svg = (p) => <svg width="30" height="30" viewBox="0 0 30 30" fill="none" aria-hidden="true" {...p} />;
const Chrome = () => (
  <Svg><circle cx="15" cy="15" r="15" fill="#fbc116" /><path d="M15 15L2 7.500A15 15 0 0 1 28 7.500H15Z" fill="#e33b2e" /><path d="M2 7.500A15 15 0 0 0 15 30L21.500 18.800L15 15L8.500 18.800Z" fill="#269a48" /><circle cx="15" cy="15" r="7.500" fill="#fff" /><circle cx="15" cy="15" r="5.700" fill="#2f7bea" /></Svg>
);
const icons = {
  start: <Svg><path d="M0 0h14.300v14.300H0zM15.300 0H30v14.300H15.300zM0 15.300h14.300V30H0zM15.300 15.300H30V30H15.300z" fill="url(#wg)" /><defs><linearGradient id="wg" x1="0" y1="0" x2="1" y2="1"><stop stopColor="#7eeeff" /><stop offset="1" stopColor="#0b93f8" /></linearGradient></defs></Svg>,
  search: <Svg><circle cx="13.500" cy="12.500" r="10.800" fill="#444" stroke="#e8e8e8" strokeWidth="2.600" /><path d="M21 21l6 7" stroke="#ddd" strokeWidth="3.400" strokeLinecap="round" /></Svg>,
  tasks: <Svg><rect y="8" width="22" height="20" rx="1.500" fill="#5c5c5c" /><rect x="8" width="22" height="21" rx="1.500" fill="#f0f0f0" /><path d="M8 8h14v13H8z" fill="#bdbdbd" /></Svg>,
  chrome: <Chrome />,
  copilot: <Svg><defs><linearGradient id="ca" x1="0" y1="0" x2="0" y2="1"><stop stopColor="#1761e0" /><stop offset=".55" stopColor="#27b7c0" /><stop offset="1" stopColor="#e6d522" /></linearGradient><linearGradient id="cb" x1="0" y1="0" x2="0" y2="1"><stop stopColor="#9b54f0" /><stop offset=".5" stopColor="#ee6091" /><stop offset="1" stopColor="#ffa45c" /></linearGradient></defs><path d="M8 2h11q3 0 4 4l1 3h-4q-3 0-4 3l-3 7q-1 2-3 2H5q-4 0-4-4Q3 2 8 2Z" fill="url(#ca)" /><path d="M22 28H11q2-1 3-4l3-11q1-3 4-3h4q4 0 4 4-2 14-7 14Z" fill="url(#cb)" /><path d="M16 10h3l-4 11h-3Z" fill="#222" /></Svg>,
  edge: <Svg><defs><linearGradient id="ea" x1="0" y1=".2" x2="1" y2=".6"><stop stopColor="#229fe0" /><stop offset="1" stopColor="#63e35b" /></linearGradient></defs><circle cx="15" cy="15" r="15" fill="#0e70c4" /><path d="M0 14C1 5 8 0 15 0c9 0 15 6 15 13 0 5-4 8-8 8-3 0-5-1-5-2 0-1 2-2 2-5 0-4-4-6-8-6-6 0-10 4-11 6Z" fill="url(#ea)" /><path d="M11 11c-3 10 5 16 16 13-3 4-7 6-12 6-8-1-12-14-4-19Z" fill="#0c539d" /><path d="M16 12c-3 2-4 6-1 9 3 2 7 2 10 0-4 1-8-1-8-3 0-1 2-2 2-4 0-1-1-2-3-2Z" fill="#222" /></Svg>,
  help: <Svg><circle cx="15" cy="15" r="13.700" fill="#1598dc" stroke="#fff" strokeWidth="2" /><path d="M10 11c0-7 11-7 11-1 0 4-6 4-6 9" stroke="#fff" strokeWidth="4" /><circle cx="15" cy="23.500" r="2.600" fill="#fff" /></Svg>,
  files: <Svg><path d="M0 3q0-1 1-1h9l3 3h16v8H0Z" fill="#e0a008" /><path d="M0 10h10l3-4h16q1 0 1 1v20q0 1-1 1H1q-1 0-1-1Z" fill="#ffd04a" /><path d="M5 28v-4q0-3 3-3h14q3 0 3 3v4Z" fill="#1278d1" /><path d="M9 25h12" stroke="#064c92" strokeWidth="1.500" /></Svg>,
  store: <Svg><path d="M8 8V2h14v6" stroke="#32b4f2" strokeWidth="2" /><path d="M0 5h30v20q0 5-5 5H5q-5 0-5-5Z" fill="#efefef" /><path d="M9 12h5v5H9z" fill="#f25022" /><path d="M15.500 12h5v5h-5z" fill="#7fba00" /><path d="M9 18.500h5v5H9z" fill="#00a4ef" /><path d="M15.500 18.500h5v5h-5z" fill="#ffb900" /></Svg>,
  shield: <Svg><path d="M2 0l13 6L28 0v24l-13 6-13-6Z" fill="#bc2a2c" /><path d="M8 9l7 3.500L22 9v11l-7 3.500L8 20Z" fill="#222" /></Svg>,
  video: <Svg><rect y="4" width="30" height="21" rx="4" fill="#f00" /><path d="M11 10l9 4.500-9 4.500Z" fill="#fff" /></Svg>,
  hp: <Svg><rect width="30" height="30" rx="1" fill="#0a97d8" /><g fill="#fff" fontFamily="Open Sans, sans-serif" fontWeight="600"><text x="2" y="18" fontSize="8">my</text><text x="14" y="19" fontSize="12" fontStyle="italic">hp</text></g></Svg>,
  chat: <Svg><path d="M2 28l2-7a13 13 0 1 1 5 5Z" stroke="#25d366" strokeWidth="3" /><path d="M9 8c2-2 4 3 3 4s0 2 2 4 3 3 4 2 5 1 4 3c-3 4-9 1-12-3S7 11 9 8Z" fill="#25d366" /></Svg>,
  code: <Svg><path d="M0 10l3-2 19 15v6Z" fill="#0a6fb8" /><path d="M0 20l3 2L22 7V1Z" fill="#1687d3" /><path d="M21 0l9 4v22l-9 4Z" fill="#2fa8f5" /></Svg>,
  term: <Svg><rect y="4" width="30" height="22" rx="1.500" fill="#464646" /><path d="M0 4h10v4H0zM20 4h10v4H20z" fill="#888" /><path d="M10 4h10v4H10z" fill="#ccc" /><path d="M4 11l6 6-6 6" stroke="#eee" strokeWidth="3" /><path d="M13 22h10" stroke="#fff" strokeWidth="2.500" /></Svg>,
  notes: <Svg><path d="M4 2h22v27H4Z" fill="#57c5e2" /><path d="M4 27h22v3H4Z" fill="#a1561f" /><path d="M4 25h22v2H4Z" fill="#fff" /><path d="M8 9h14M8 14h14M8 19h14" stroke="#176a88" strokeWidth="1.700" /><path d="M6 0v4M11 0v4M16 0v4M21 0v4M25 0v4" stroke="#176a88" strokeWidth="2.400" /></Svg>,
};
const apps = [
  ["start", "Start"], ["search", "Search"], ["tasks", "Task view"], ["chrome", "Chrome"], ["copilot", "Copilot"], ["edge", "Edge"],
  ["help", "Help", { bg: "#ffc20e", text: "" }], ["files", "File Explorer"], ["store", "Store"], ["shield", "Antivirus"], ["video", "Video"], ["hp", "myHP"],
  ["chrome", "Chrome, profile V", { bg: "#064a3e", text: "V" }, true], ["chat", "Messages", { bg: "#dfa0e6", text: "48", wide: true }, true],
  ["chrome", "Chrome, profile n", { bg: "#f4511e", text: "n" }, true, true], ["chrome", "Chrome, second profile V", { bg: "#689f38", text: "V" }, true],
  ["code", "Code editor", null, true], ["term", "Terminal", null, true], ["notes", "Notepad", null, true],
];

const Arrow = ({ d }) => <svg width="12" height="12" viewBox="0 0 12 12" aria-hidden="true"><path d={d} fill="currentColor" stroke="currentColor" strokeLinejoin="round" /></svg>;

export default function App() {
  return (
    <Screen>
      <Global />
      <TabStrip>
        <TabMenu aria-label="Search tabs"><ChevronDown size={16} strokeWidth={2.5} /></TabMenu>
        <Tab>
          <svg width="19" height="19" viewBox="0 0 20 20" aria-hidden="true"><circle cx="10" cy="10" r="9.500" fill="#a2aaae" /><path d="M2.500 9Q6 13 9 12v3l-1 3Q1 15 2.500 9ZM8 3q4 0 5 2l-4 2v2h6l2 3q2-5-2-8-3-3-7-1Z" fill="#4b3440" /></svg>
          <TabTitle>8e133b3e-7ab4-43f0-a4b3-80e4bbc52428</TabTitle>
          <button aria-label="Close tab"><X size={16} strokeWidth={2.3} /></button>
        </Tab>
        <NewTab aria-label="New tab"><Plus size={18} /></NewTab>
        <WindowButtons>
          <button aria-label="Minimize"><Minus size={17} strokeWidth={1.5} /></button>
          <button aria-label="Restore"><svg width="14" height="14" viewBox="0 0 14 14" fill="none" stroke="currentColor"><rect x="1" y="3.500" width="9.500" height="9.500" rx="1.500" strokeWidth="1.300" /><path d="M3.500 1H11q2 0 2 2v7.500" strokeWidth="1.300" /></svg></button>
          <button aria-label="Close window"><X size={20} strokeWidth={1.5} /></button>
        </WindowButtons>
      </TabStrip>
      <Toolbar>
        <NavButton aria-label="Back"><ArrowLeft size={21} /></NavButton>
        <NavButton aria-label="Forward" $dim><ArrowRight size={21} /></NavButton>
        <NavButton aria-label="Reload"><RotateCw size={18} strokeWidth={2.4} /></NavButton>
        <AddressBar>
          <SiteInfo aria-label="Site information"><svg width="18" height="18" viewBox="0 0 18 18" fill="none" stroke="currentColor" strokeWidth="1.800"><circle cx="4" cy="5" r="2.200" /><path d="M9 5h7M2 13h7" /><circle cx="14" cy="13" r="2.200" /></svg></SiteInfo>
          <Address aria-label="Address" defaultValue="8e133b3e-7ab4-43f0-a4b3-80e4bbc52428-00-2air5o2byniiv.riker.replit.dev/vendor" />
          <BarIcon aria-label="Passwords"><svg width="24" height="18" viewBox="0 0 24 18" fill="none" stroke="#d6c5cd" strokeWidth="2"><circle cx="7" cy="9" r="5.500" /><circle cx="7" cy="9" r="1.800" fill="#d6c5cd" /><path d="M12 7h11v7h-5v-3h-6M20 11v3" /></svg></BarIcon>
          <BarIcon aria-label="Bookmark"><Star size={20} /></BarIcon>
        </AddressBar>
        <Profile aria-label="Profile n">n</Profile>
        <ErrorPill>Error<svg width="5" height="20" viewBox="0 0 5 20" fill="currentColor"><circle cx="2.500" cy="3" r="2" /><circle cx="2.500" cy="10" r="2" /><circle cx="2.500" cy="17" r="2" /></svg></ErrorPill>
      </Toolbar>

      <Viewport>
        <PageArea>
          <Banner>
            <p>This is a temporary preview. <a href="#deploy">Deploy your app</a> before sharing to keep it live.</p>
            <button aria-label="Dismiss"><X size={18} strokeWidth={1.8} color="#c5d7e8" /></button>
          </Banner>
          <Shell>
            <Sidebar>
              <Brand>
                <BrandMark><Truck size={30} /></BrandMark>
                <div><BrandName>DeliveryHub</BrandName><BrandSub>Vendor Dashboard</BrandSub></div>
              </Brand>
              <UserCard>
                <UserAvatar>V</UserAvatar>
                <div><UserName>Vendor</UserName><UserMail>123@gmail.com</UserMail></div>
              </UserCard>
              <Menu>
                <MenuItem href="#dashboard" $active><MenuIcon />Dashboard</MenuItem>
                <MenuItem href="#orders"><MenuIcon><ShoppingBag size={25} /></MenuIcon>Orders<CountBadge><mark>0</mark></CountBadge></MenuItem>
                <MenuItem href="#partners"><MenuIcon><Users size={25} /></MenuIcon>Delivery Partners</MenuItem>
              </Menu>
              <Logout>Logout</Logout>
            </Sidebar>
            <Main>
              <MapCard>
                <MapFrame>
                  <CityMap />
                  <ZoomControl>
                    <button aria-label="Zoom in"><Plus size={24} strokeWidth={3} strokeLinecap="butt" /></button>
                    <button aria-label="Zoom out"><Minus size={24} strokeWidth={2.5} strokeLinecap="butt" /></button>
                  </ZoomControl>
                  <Legend>
                    <li><Dot $color="#3b82f6" />Delivery Partner</li>
                    <li><Dot $color="#ef4444" />Customer Location</li>
                    <li><Dot $color="#22c55e" />Restaurant/Store</li>
                  </Legend>
                  <Attribution>
                    <svg width="15" height="10" viewBox="0 0 15 10"><path d="M0 0h15v5H0z" fill="#4c7be1" /><path d="M0 5h15v5H0z" fill="#ffd500" /></svg>
                    <a href="#leaflet">Leaflet</a><span>| © OpenStreetMap contributors</span>
                  </Attribution>
                </MapFrame>
              </MapCard>
              <CardGrid>
                <Card>
                  <CardHead><CardTitle>Recent Orders</CardTitle><Action $tone="#1d4ed8"><Plus size={20} strokeWidth={1.7} />New Order</Action></CardHead>
                  <Empty>No orders yet</Empty>
                </Card>
                <Card>
                  <CardHead><CardTitle>Delivery Partners</CardTitle><Action $tone="#16a34a"><UserPlus size={20} strokeWidth={1.8} />Add Partner</Action></CardHead>
                  <Empty>No delivery partners registered</Empty>
                </Card>
              </CardGrid>
            </Main>
          </Shell>
        </PageArea>
        <Scrollbar $vertical aria-hidden="true">
          <Arrow d="M6 2L11 11H1Z" /><ScrollSpace $share={288} /><ScrollThumb $vertical $share={562} /><Arrow d="M6 10L11 1H1Z" />
        </Scrollbar>
        <Scrollbar aria-hidden="true">
          <Arrow d="M2 6L11 1V11Z" /><ScrollThumb $share={1} /><Arrow d="M10 6L1 1V11Z" />
        </Scrollbar>
      </Viewport>

      <Taskbar>
        <Widgets aria-label="Widgets, 7 alerts">
          <svg width="28" height="34" viewBox="0 0 28 34"><path d="M6 3l16 6v18L6 32Z" fill="#d18413" /><path d="M2 13q11 5 23 0M2 19q11 5 23 0M2 25q11 4 23 0" fill="none" stroke="#f6bd3b" strokeWidth="2.500" /><path d="M7 4v27" stroke="#f3a929" strokeWidth="2" /></svg>
          <WidgetCount>7</WidgetCount>
        </Widgets>
        <Apps>
          {apps.map(([icon, name, badge, running, active]) => (
            <AppButton key={name} aria-label={name} $running={running} $active={active}>
              {icons[icon]}
              {badge && <AppBadge $bg={badge.bg} $wide={badge.wide}>{badge.text}</AppBadge>}
            </AppButton>
          ))}
        </Apps>
        <Tray>
          <TrayIcon aria-label="Show hidden icons"><ChevronUp size={20} strokeWidth={2.3} /></TrayIcon>
          <TrayIcon $width={42} aria-label="Cloud storage offline"><svg width="22" height="18" viewBox="0 0 22 18"><path d="M5 15q-4 0-4-4t5-4q1-5 6-5t6 5q3 1 3 4t-4 4Z" fill="#94878a" /><path d="M3 1l16 16" stroke="#fff" strokeWidth="1.500" /></svg></TrayIcon>
          <TrayText $width={38} $align="center">ENG<br />IN</TrayText>
          <span />
          <TrayIcon aria-label="Network"><Wifi size={22} /></TrayIcon>
          <TrayIcon aria-label="Volume"><Volume2 size={21} strokeWidth={1.6} /></TrayIcon>
          <TrayIcon aria-label="Battery"><svg width="22" height="18" viewBox="0 0 22 18"><rect x="2" y="5" width="16" height="10" rx="2.500" fill="#fff" stroke="#fff" strokeWidth="2" /><path d="M20 8v4" stroke="#fff" strokeWidth="2" /><path d="M5 0L1 6h3L3 10l5-6H5Z" fill="#fff" stroke="#361c1a" /></svg></TrayIcon>
          <TrayText $width={89} $align="right">20:30<br />27-05-2025</TrayText>
        </Tray>
      </Taskbar>
    </Screen>
  );
}
